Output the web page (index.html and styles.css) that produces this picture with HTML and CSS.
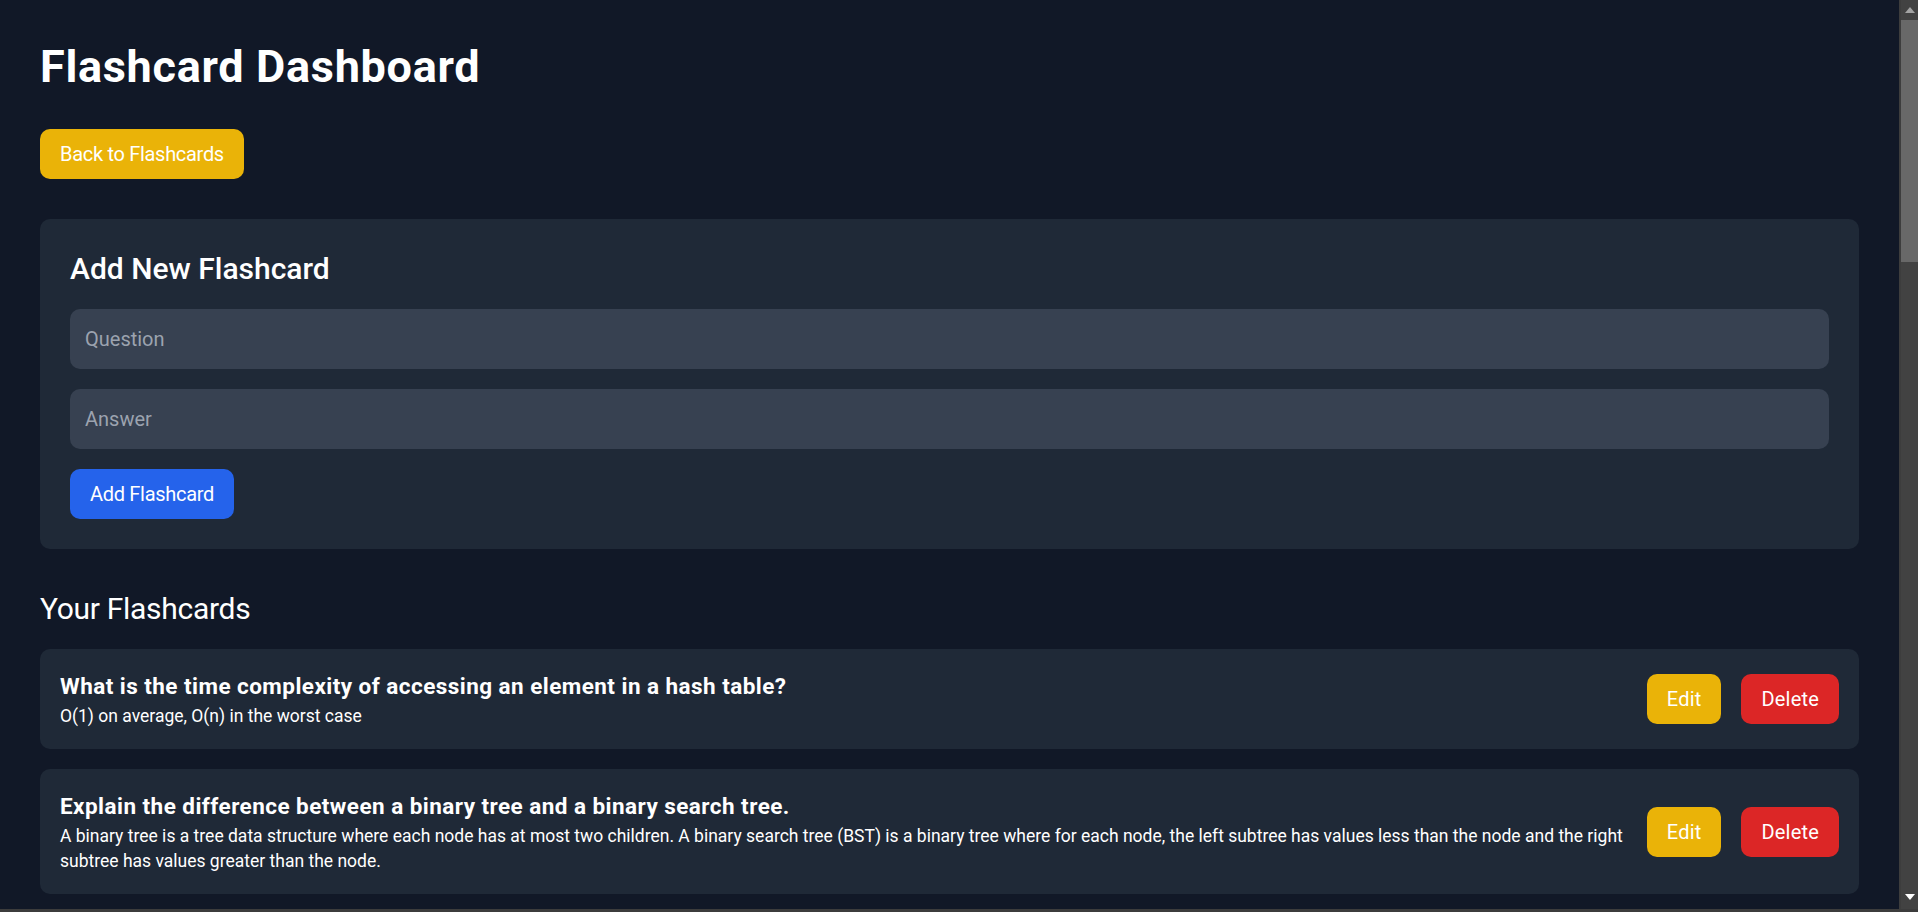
FILE: index.html
```html
<!DOCTYPE html>
<html lang="en">
<head>
<meta charset="utf-8">
<title>Flashcard Dashboard</title>
<link rel="stylesheet" href="styles.css">
</head>
<body>
<div class="window">
  <div class="viewport">
    <main class="page">
      <h1 class="title">Flashcard Dashboard</h1>
      <button class="btn btn-yellow back-btn">Back to Flashcards</button>

      <section class="panel">
        <h2 class="panel-title">Add New Flashcard</h2>
        <input class="field" type="text" placeholder="Question">
        <input class="field" type="text" placeholder="Answer">
        <button class="btn btn-blue">Add Flashcard</button>
      </section>

      <h2 class="list-title">Your Flashcards</h2>
      <div class="card-list">
        <div class="card">
          <div class="card-text">
            <div class="question">What is the time complexity of accessing an element in a hash table?</div>
            <div class="answer">O(1) on average, O(n) in the worst case</div>
          </div>
          <div class="card-actions">
            <button class="btn btn-yellow">Edit</button>
            <button class="btn btn-red">Delete</button>
          </div>
        </div>
        <div class="card">
          <div class="card-text">
            <div class="question">Explain the difference between a binary tree and a binary search tree.</div>
            <div class="answer">A binary tree is a tree data structure where each node has at most two children. A binary search tree (BST) is a binary tree where for each node, the left subtree has values less than the node and the right subtree has values greater than the node.</div>
          </div>
          <div class="card-actions">
            <button class="btn btn-yellow">Edit</button>
            <button class="btn btn-red">Delete</button>
          </div>
        </div>
      </div>
    </main>
    <div class="scrollbar">
      <div class="sb-arrow sb-up"></div>
      <div class="sb-track"><div class="sb-thumb"></div></div>
      <div class="sb-arrow sb-down"></div>
    </div>
  </div>
  <div class="frame-bottom"></div>
</div>
</body>
</html>
```

FILE: styles.css
```css
* { box-sizing: border-box; }

html, body {
  margin: 0;
  padding: 0;
  height: 100%;
  overflow: hidden;
}

body {
  font-family: Roboto, "Noto Sans", "Liberation Sans", sans-serif;
  background: #111827;
  color: #ffffff;
}

.window {
  display: flex;
  flex-direction: column;
  height: 912px;
}

.viewport {
  display: flex;
  flex: 1;
  min-height: 0;
}

.page {
  flex: 1;
  min-width: 0;
  overflow: hidden;
  padding: 40px;
  background: #111827;
}

.title {
  margin: 0 0 39px;
  font-size: 45px;
  line-height: 50px;
  font-weight: 700;
  letter-spacing: 0.7px;
  padding-top: 2px;
  height: 50px;
}

.btn {
  font-family: inherit;
  height: 50px;
  padding: 0 20px;
  border: 0;
  border-radius: 10px;
  font-size: 20px;
  line-height: 30px;
  letter-spacing: -0.3px;
  color: #ffffff;
  cursor: pointer;
}

.btn-yellow { background: #eab308; }
.btn-blue { background: #2563eb; }
.btn-red { background: #dc2626; }

.back-btn {
  display: block;
  margin-bottom: 40px;
}

.panel {
  background: #1f2937;
  border-radius: 10px;
  padding: 30px;
  margin-bottom: 40px;
  display: flex;
  flex-direction: column;
  align-items: flex-start;
}

.panel-title,
.list-title {
  margin: 0 0 20px;
  font-size: 30px;
  line-height: 40px;
  font-weight: 500;
}

.list-title {
  font-weight: 400;
  letter-spacing: -0.3px;
}

.field {
  display: block;
  width: 100%;
  height: 60px;
  margin: 0 0 20px;
  padding: 0 15px;
  border: 0;
  border-radius: 10px;
  background: #374151;
  color: #ffffff;
  font-family: inherit;
  font-size: 20px;
  outline: none;
}

.field::placeholder { color: #9ca3af; }

.card-list {
  display: flex;
  flex-direction: column;
  gap: 20px;
}

.card {
  background: #1f2937;
  border-radius: 10px;
  padding: 20px;
  display: flex;
  align-items: center;
  gap: 20px;
}

.card-text {
  flex: 1;
  min-width: 0;
}

.question {
  font-size: 22.5px;
  line-height: 35px;
  font-weight: 700;
  letter-spacing: 0.45px;
}

.answer {
  font-size: 17.5px;
  line-height: 25px;
}

.card-actions {
  display: flex;
  gap: 20px;
  flex-shrink: 0;
}

.card-actions .btn {
  letter-spacing: 0.2px;
}

.scrollbar {
  width: 19px;
  background: #424242;
  display: flex;
  flex-direction: column;
  border-left: 2px solid #3d3d3d;
}

.sb-arrow {
  height: 20px;
  position: relative;
}

.sb-track {
  flex: 1;
}

.sb-thumb {
  height: 242px;
  background: #686868;
}

.sb-up::after,
.sb-down::after {
  content: "";
  position: absolute;
  left: 4px;
  width: 0;
  height: 0;
  border-left: 5px solid transparent;
  border-right: 5px solid transparent;
}

.sb-up::after {
  top: 7px;
  border-bottom: 6px solid #a3a3a3;
}

.sb-down::after {
  top: 5px;
  border-top: 6px solid #ffffff;
}

.frame-bottom {
  height: 3px;
  background: #3c3c3c;
  flex-shrink: 0;
}
```
